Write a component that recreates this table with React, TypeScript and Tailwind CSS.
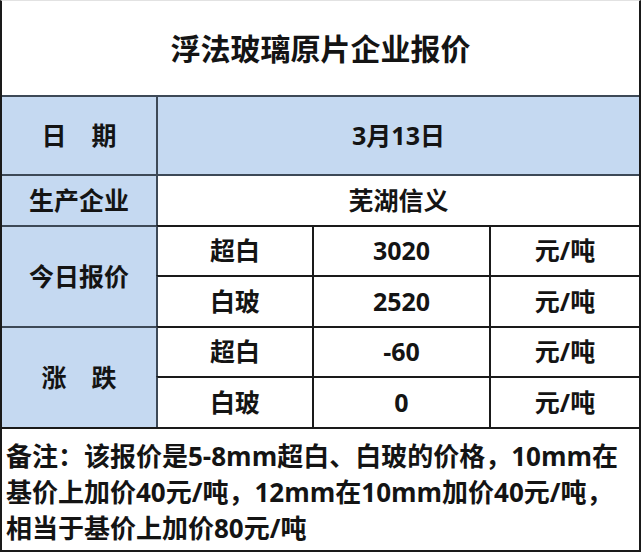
const font = { fontFamily: '"Open Sans", "Noto Sans CJK SC", sans-serif' };

type PriceRow = {
  kind: string;
  value: string;
  unit: string;
};

const todayRows: PriceRow[] = [
  { kind: "超白", value: "3020", unit: "元/吨" },
  { kind: "白玻", value: "2520", unit: "元/吨" },
];

const changeRows: PriceRow[] = [
  { kind: "超白", value: "-60", unit: "元/吨" },
  { kind: "白玻", value: "0", unit: "元/吨" },
];

const blueLabel =
  "flex items-center justify-center bg-[#c5d9f1] border-t-2 border-[#3d4957]";

function PriceGroup({ label, rows }: { label: string; rows: PriceRow[] }) {
  return (
    <>
      <div className={`${blueLabel} row-span-2`}>{label}</div>
      {rows.map((row) => (
        <div key={row.kind} className="contents">
          <div className="flex items-center justify-center border-t-2 border-l-2 border-t-[#1a1a1a] border-l-[#3d4957]">
            {row.kind}
          </div>
          <div className="flex items-center justify-center border-t-2 border-l-2 border-[#1a1a1a]">
            {row.value}
          </div>
          <div className="flex items-center justify-center border-t-2 border-l-2 border-[#1a1a1a]">
            {row.unit}
          </div>
        </div>
      ))}
    </>
  );
}

export default function App() {
  return (
    <div
      style={font}
      className="flex h-[552px] w-[641px] flex-col border-x-2 border-b-2 border-[#1a1a1a] border-t border-t-[#e2e2e2] bg-white font-bold text-[#141414]"
    >
      <header className="flex h-[94px] shrink-0 items-center justify-center text-[30px]">
        浮法玻璃原片企业报价
      </header>

      <div className="grid shrink-0 grid-cols-[154px_156px_177px_1fr] grid-rows-[79px_51px_50px_51px_50px_51px] text-[25px]">
        <div className={blueLabel}>日　期</div>
        <div className="col-span-3 flex items-center justify-center border-t-2 border-l-2 border-[#3d4957] bg-[#c5d9f1]">
          3月13日
        </div>

        <div className={blueLabel}>生产企业</div>
        <div className="col-span-3 flex items-center justify-center border-t-2 border-l-2 border-[#3d4957]">
          芜湖信义
        </div>

        <PriceGroup label="今日报价" rows={todayRows} />
        <PriceGroup label="涨　跌" rows={changeRows} />
      </div>

      <p className="flex-1 border-t-2 border-[#1a1a1a] px-1 pt-[9px] text-[26px] leading-[36px]">
        备注：该报价是5-8mm超白、白玻的价格，10mm在基价上加价40元/吨，12mm在10mm加价40元/吨，相当于基价上加价80元/吨
      </p>
    </div>
  );
}
